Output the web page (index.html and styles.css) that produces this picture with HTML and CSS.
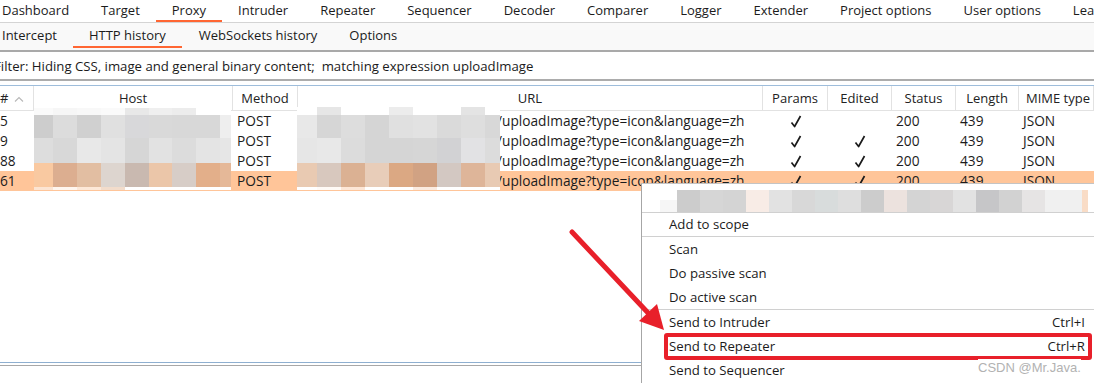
FILE: index.html
```html
<!DOCTYPE html>
<html>
<head>
<meta charset="utf-8">
<link rel="stylesheet" href="styles.css">
</head>
<body>
<div class="app">
  <nav class="tabs">
    <span class="tab">Dashboard</span>
    <span class="tab">Target</span>
    <span class="tab active">Proxy</span>
    <span class="tab">Intruder</span>
    <span class="tab">Repeater</span>
    <span class="tab">Sequencer</span>
    <span class="tab">Decoder</span>
    <span class="tab">Comparer</span>
    <span class="tab">Logger</span>
    <span class="tab">Extender</span>
    <span class="tab">Project options</span>
    <span class="tab">User options</span>
    <span class="tab">Learn</span>
  </nav>
  <nav class="subtabs">
    <span class="subtab">Intercept</span>
    <span class="subtab active">HTTP history</span>
    <span class="subtab">WebSockets history</span>
    <span class="subtab">Options</span>
  </nav>
  <div class="filter"><span class="filter-text">Filter: Hiding CSS, image and general binary content;&nbsp; matching expression uploadImage</span></div>

  <div class="table-wrap">
    <div class="grid head">
      <div class="hc num">#<svg class="sort" width="10" height="6" viewBox="0 0 10 6"><path d="M1 5.5 L5 1.5 L9 5.5" fill="none" stroke="#b8b8b8" stroke-width="1.1"/></svg></div>
      <div class="hc">Host</div>
      <div class="hc">Method</div>
      <div class="hc">URL</div>
      <div class="hc">Params</div>
      <div class="hc">Edited</div>
      <div class="hc">Status</div>
      <div class="hc">Length</div>
      <div class="hc left">MIME type</div>
    </div>

    <div class="grid row">
      <div class="c">5</div><div class="c"></div><div class="c">POST</div>
      <div class="c url">/uploadImage?type=icon&amp;language=zh</div>
      <div class="c mid"><svg class="chk" viewBox="0 0 12 13"><path d="M1.5 7.5 L4.6 11.5 L10.5 1"/></svg></div>
      <div class="c mid"></div>
      <div class="c">200</div><div class="c">439</div><div class="c">JSON</div>
    </div>
    <div class="grid row">
      <div class="c">9</div><div class="c"></div><div class="c">POST</div>
      <div class="c url">/uploadImage?type=icon&amp;language=zh</div>
      <div class="c mid"><svg class="chk" viewBox="0 0 12 13"><path d="M1.5 7.5 L4.6 11.5 L10.5 1"/></svg></div>
      <div class="c mid"><svg class="chk" viewBox="0 0 12 13"><path d="M1.5 7.5 L4.6 11.5 L10.5 1"/></svg></div>
      <div class="c">200</div><div class="c">439</div><div class="c">JSON</div>
    </div>
    <div class="grid row">
      <div class="c">88</div><div class="c"></div><div class="c">POST</div>
      <div class="c url">/uploadImage?type=icon&amp;language=zh</div>
      <div class="c mid"><svg class="chk" viewBox="0 0 12 13"><path d="M1.5 7.5 L4.6 11.5 L10.5 1"/></svg></div>
      <div class="c mid"><svg class="chk" viewBox="0 0 12 13"><path d="M1.5 7.5 L4.6 11.5 L10.5 1"/></svg></div>
      <div class="c">200</div><div class="c">439</div><div class="c">JSON</div>
    </div>
    <div class="grid row selected">
      <div class="c">61</div><div class="c"></div><div class="c">POST</div>
      <div class="c url">/uploadImage?type=icon&amp;language=zh</div>
      <div class="c mid"><svg class="chk" viewBox="0 0 12 13"><path d="M1.5 7.5 L4.6 11.5 L10.5 1"/></svg></div>
      <div class="c mid"><svg class="chk" viewBox="0 0 12 13"><path d="M1.5 7.5 L4.6 11.5 L10.5 1"/></svg></div>
      <div class="c">200</div><div class="c">439</div><div class="c">JSON</div>
    </div>

    <svg class="mosaic host-mosaic" width="197" height="82" viewBox="0 0 197 82" shape-rendering="crispEdges">
      <rect x="0" y="0" width="19" height="7" fill="#fafafa"/><rect x="19" y="0" width="24" height="7" fill="#f6f6f6"/><rect x="43" y="0" width="24" height="7" fill="#f8f8f8"/><rect x="67" y="0" width="24" height="7" fill="#fafafa"/><rect x="91" y="0" width="24" height="7" fill="#e8e8e8"/><rect x="115" y="0" width="23" height="7" fill="#efefef"/><rect x="138" y="0" width="24" height="7" fill="#ececec"/><rect x="162" y="0" width="35" height="7" fill="#ffffff"/>
      <rect x="0" y="7" width="19" height="23" fill="#cdcdcd"/><rect x="19" y="7" width="24" height="23" fill="#dcdcdc"/><rect x="43" y="7" width="24" height="23" fill="#d0d0d0"/><rect x="67" y="7" width="24" height="23" fill="#e0e0e0"/><rect x="91" y="7" width="24" height="23" fill="#d8d8da"/><rect x="115" y="7" width="23" height="23" fill="#d9d9d9"/><rect x="138" y="7" width="24" height="23" fill="#d8d8d8"/><rect x="162" y="7" width="24" height="23" fill="#d8d8d8"/><rect x="186" y="7" width="11" height="23" fill="#eeeeee"/>
      <rect x="0" y="30" width="19" height="25" fill="#dddddd"/><rect x="19" y="30" width="24" height="25" fill="#d8d8d8"/><rect x="43" y="30" width="24" height="25" fill="#e8e8e8"/><rect x="67" y="30" width="24" height="25" fill="#e4e4e4"/><rect x="91" y="30" width="24" height="25" fill="#d6d6d6"/><rect x="115" y="30" width="23" height="25" fill="#e2e2e2"/><rect x="138" y="30" width="24" height="25" fill="#dcdcdc"/><rect x="162" y="30" width="24" height="25" fill="#e4e4e4"/><rect x="186" y="30" width="11" height="25" fill="#e6e6e6"/>
      <rect x="0" y="55" width="19" height="24" fill="#f9c9a1"/><rect x="19" y="55" width="24" height="24" fill="#dcae90"/><rect x="43" y="55" width="24" height="24" fill="#e2bea2"/><rect x="67" y="55" width="24" height="24" fill="#ddd5cf"/><rect x="91" y="55" width="24" height="24" fill="#c9b9b0"/><rect x="115" y="55" width="23" height="24" fill="#ebc6a9"/><rect x="138" y="55" width="24" height="24" fill="#d7cdc7"/><rect x="162" y="55" width="24" height="24" fill="#e3af8a"/><rect x="186" y="55" width="11" height="24" fill="#e5b898"/>
      <rect x="0" y="79" width="19" height="3" fill="#fce4d2"/><rect x="19" y="79" width="24" height="3" fill="#fff6ef"/><rect x="43" y="79" width="24" height="3" fill="#fde8d8"/><rect x="67" y="79" width="24" height="3" fill="#f2dccb"/><rect x="91" y="79" width="106" height="3" fill="#ffffff"/>
    </svg>

    <svg class="mosaic url-mosaic" width="203" height="83" viewBox="0 0 203 83" shape-rendering="crispEdges">
      <rect x="0" y="0" width="203" height="8" fill="#ffffff"/><rect x="20" y="0" width="24" height="8" fill="#e6e6e6"/><rect x="92" y="0" width="24" height="8" fill="#ececec"/><rect x="164" y="0" width="24" height="8" fill="#e4e4e4"/>
      <rect x="0" y="8" width="20" height="23" fill="#e8e8e8"/><rect x="20" y="8" width="24" height="23" fill="#d6d6d6"/><rect x="44" y="8" width="24" height="23" fill="#dddddd"/><rect x="68" y="8" width="24" height="23" fill="#d5d5d5"/><rect x="92" y="8" width="24" height="23" fill="#e0e0e0"/><rect x="116" y="8" width="24" height="23" fill="#e2e2e2"/><rect x="140" y="8" width="24" height="23" fill="#dadada"/><rect x="164" y="8" width="24" height="23" fill="#dedede"/><rect x="188" y="8" width="15" height="23" fill="#d8d8d8"/>
      <rect x="0" y="31" width="20" height="25" fill="#e6e6e6"/><rect x="20" y="31" width="24" height="25" fill="#e8e8e8"/><rect x="44" y="31" width="24" height="25" fill="#dcdcdc"/><rect x="68" y="31" width="24" height="25" fill="#d5d5d5"/><rect x="92" y="31" width="24" height="25" fill="#d5d5d5"/><rect x="116" y="31" width="24" height="25" fill="#d6d6d6"/><rect x="140" y="31" width="24" height="25" fill="#d2d2d4"/><rect x="164" y="31" width="24" height="25" fill="#e2e2e4"/><rect x="188" y="31" width="15" height="25" fill="#dcdcdc"/>
      <rect x="0" y="56" width="20" height="24" fill="#e9cab2"/><rect x="20" y="56" width="24" height="24" fill="#d8c8be"/><rect x="44" y="56" width="24" height="24" fill="#dbb193"/><rect x="68" y="56" width="24" height="24" fill="#e8cdb9"/><rect x="92" y="56" width="24" height="24" fill="#dba883"/><rect x="116" y="56" width="24" height="24" fill="#d1a283"/><rect x="140" y="56" width="24" height="24" fill="#d3c8c2"/><rect x="164" y="56" width="24" height="24" fill="#deb599"/><rect x="188" y="56" width="15" height="24" fill="#e8cab3"/>
      <rect x="0" y="80" width="203" height="3" fill="#ffffff"/><rect x="20" y="80" width="24" height="3" fill="#fffaf6"/><rect x="44" y="80" width="24" height="3" fill="#fde6d6"/><rect x="116" y="80" width="24" height="3" fill="#fbebe0"/>
    </svg>
  </div>
  <div class="bottom-line"></div>
</div>

<div class="menu">
  <div class="menu-head">
    <svg class="menu-mosaic" width="428" height="22" viewBox="0 0 428 22" shape-rendering="crispEdges">
      <rect x="0" y="10" width="17" height="12" fill="#f6f6f6"/>
      <rect x="17" y="0" width="23" height="22" fill="#cccccc"/><rect x="40" y="0" width="23" height="22" fill="#d6d6d6"/><rect x="63" y="0" width="23" height="22" fill="#d4d4d4"/><rect x="86" y="0" width="23" height="22" fill="#f8ece6"/><rect x="109" y="0" width="23" height="22" fill="#e2e2e2"/><rect x="132" y="0" width="23" height="22" fill="#d8d8d8"/><rect x="155" y="0" width="23" height="22" fill="#d8dcdc"/><rect x="178" y="0" width="23" height="22" fill="#dedede"/><rect x="201" y="0" width="23" height="22" fill="#cccccc"/><rect x="224" y="0" width="23" height="22" fill="#ece2de"/><rect x="247" y="0" width="23" height="22" fill="#d4d4d4"/><rect x="270" y="0" width="23" height="22" fill="#d8d6d6"/><rect x="293" y="0" width="23" height="22" fill="#e2e2e2"/><rect x="316" y="0" width="23" height="22" fill="#c6c6c8"/><rect x="339" y="0" width="23" height="22" fill="#d2d2d2"/><rect x="362" y="0" width="23" height="22" fill="#e6e4e4"/><rect x="385" y="0" width="37" height="22" fill="#f0f0f0"/><rect x="422" y="0" width="6" height="22" fill="#f9dcc6"/>
    </svg>
  </div>
  <div class="menu-group">
    <div class="item short">Add to scope</div>
  </div>
  <div class="menu-group">
    <div class="item">Scan</div>
    <div class="item">Do passive scan</div>
    <div class="item">Do active scan</div>
  </div>
  <div class="menu-group last">
    <div class="item"><span>Send to Intruder</span><span class="key">Ctrl+I</span></div>
    <div class="item"><span>Send to Repeater</span><span class="key">Ctrl+R</span></div>
    <div class="item"><span>Send to Sequencer</span><span class="key"></span></div>
  </div>
</div>

<div class="highlight"></div>
<svg class="arrow" width="1094" height="383" viewBox="0 0 1094 383">
  <line x1="572" y1="232" x2="651" y2="316" stroke="#e8202a" stroke-width="5" stroke-linecap="round"/>
  <polygon points="639,321 657,304 664,330" fill="#e8202a"/>
</svg>
<div class="watermark">CSDN @Mr.Java.</div>
</body>
</html>
```
FILE: styles.css
```css
html, body {
  margin: 0;
  padding: 0;
}
body {
  width: 1094px;
  height: 383px;
  overflow: hidden;
  position: relative;
  background: #ffffff;
  font-family: "Open Sans", "Noto Sans", "DejaVu Sans", sans-serif;
  font-size: 13px;
  color: #1b1b1b;
}
.app {
  display: flex;
  flex-direction: column;
}
.tabs {
  display: flex;
  height: 22px;
  margin-left: -14px;
  border-bottom: 1px solid #d4d4d4;
  white-space: nowrap;
}
.tab {
  position: relative;
  padding: 0 16px;
  line-height: 20px;
  height: 22px;
}
.tab.active::after,
.subtab.active::after {
  content: "";
  position: absolute;
  left: 0;
  right: 0;
  bottom: 0;
  height: 2px;
  background: #ff6633;
}
.subtabs {
  display: flex;
  height: 26px;
  padding-top: 1px;
  margin-left: -14px;
  background: #f9f9f9;
  border-bottom: 2px solid #a9a9a9;
  white-space: nowrap;
}
.subtab {
  position: relative;
  padding: 0 16px;
  line-height: 22px;
  height: 24px;
}
.subtab:nth-child(3) {
  padding-left: 17px;
}
.filter {
  height: 27px;
  display: flex;
  align-items: center;
  border-bottom: 2px solid #acacac;
  overflow: hidden;
  white-space: nowrap;
  font-size: 13.2px;
}
.filter-text {
  margin-left: -6px;
}
.table-wrap {
  position: relative;
  margin-top: 4px;
  height: 276px;
  border-top: 1px solid #9ebddb;
  border-bottom: 1px solid #8eafd0;
  overflow: hidden;
}
.grid {
  display: grid;
  grid-template-columns: 34px 199px 65px 465px 65px 64px 64px 63px 75px;
  white-space: nowrap;
}
.head {
  height: 25px;
}
.hc {
  display: flex;
  align-items: center;
  justify-content: center;
  border-right: 1px solid #e2e2e2;
  border-bottom: 1px solid #e2e2e2;
  color: #222;
  overflow: hidden;
}
.hc.num {
  justify-content: flex-start;
  gap: 6px;
}
.hc.left {
  justify-content: flex-start;
  padding-left: 7px;
}
.sort {
  display: block;
  margin-top: 1px;
}
.row {
  height: 20px;
}
.c {
  line-height: 20px;
  padding-left: 4px;
  overflow: hidden;
  font-size: 13.7px;
}
.c:first-child {
  padding-left: 0;
}
.c.url {
  padding-left: 199px;
}
.c.mid {
  display: flex;
  align-items: center;
  justify-content: center;
  padding-left: 0;
}
.row .c:nth-child(3) {
  background: #ffffff;
}
.row.selected {
  background: #ffc599;
}
.row.selected .c:nth-child(3) {
  background: #ffc599;
}
.chk {
  width: 12px;
  height: 13px;
}
.chk path {
  fill: none;
  stroke: #1b1b1b;
  stroke-width: 1.7;
  stroke-linejoin: round;
}
.mosaic {
  position: absolute;
  display: block;
}
.host-mosaic {
  left: 34px;
  top: 22px;
}
.url-mosaic {
  left: 297px;
  top: 21px;
}
.bottom-line {
  margin-top: 2px;
  height: 1px;
  background: #a8a8a8;
}
.menu {
  position: absolute;
  left: 641px;
  top: 183px;
  width: 460px;
  height: 210px;
  background: #ffffff;
  border-left: 1px solid #a6a6a6;
  border-top: 1px solid #c4c4c4;
  font-size: 13.2px;
}
.menu-head {
  height: 29px;
  padding-top: 6px;
  box-sizing: border-box;
  border-bottom: 1px solid #d0d0d0;
}
.menu-mosaic {
  display: block;
  margin-left: 18px;
}
.menu-group {
  border-bottom: 1px solid #d0d0d0;
}
.menu-group.last {
  border-bottom: none;
}
.item {
  display: flex;
  justify-content: space-between;
  height: 24px;
  line-height: 24px;
  padding-left: 27px;
  width: 416px;
  color: #1b1b1b;
}
.item.short {
  height: 23px;
  line-height: 23px;
}
.key {
  color: #1b1b1b;
}
.highlight {
  position: absolute;
  left: 664px;
  top: 333px;
  width: 420px;
  height: 19px;
  border: 4px solid #e8202a;
  border-radius: 3px;
}
.arrow {
  position: absolute;
  left: 0;
  top: 0;
  pointer-events: none;
}
.watermark {
  position: absolute;
  left: 978px;
  top: 359px;
  font-family: "Liberation Sans", Arial, sans-serif;
  font-size: 13px;
  color: #b2b2b2;
  background: #ffffff;
  line-height: 18px;
}
```
